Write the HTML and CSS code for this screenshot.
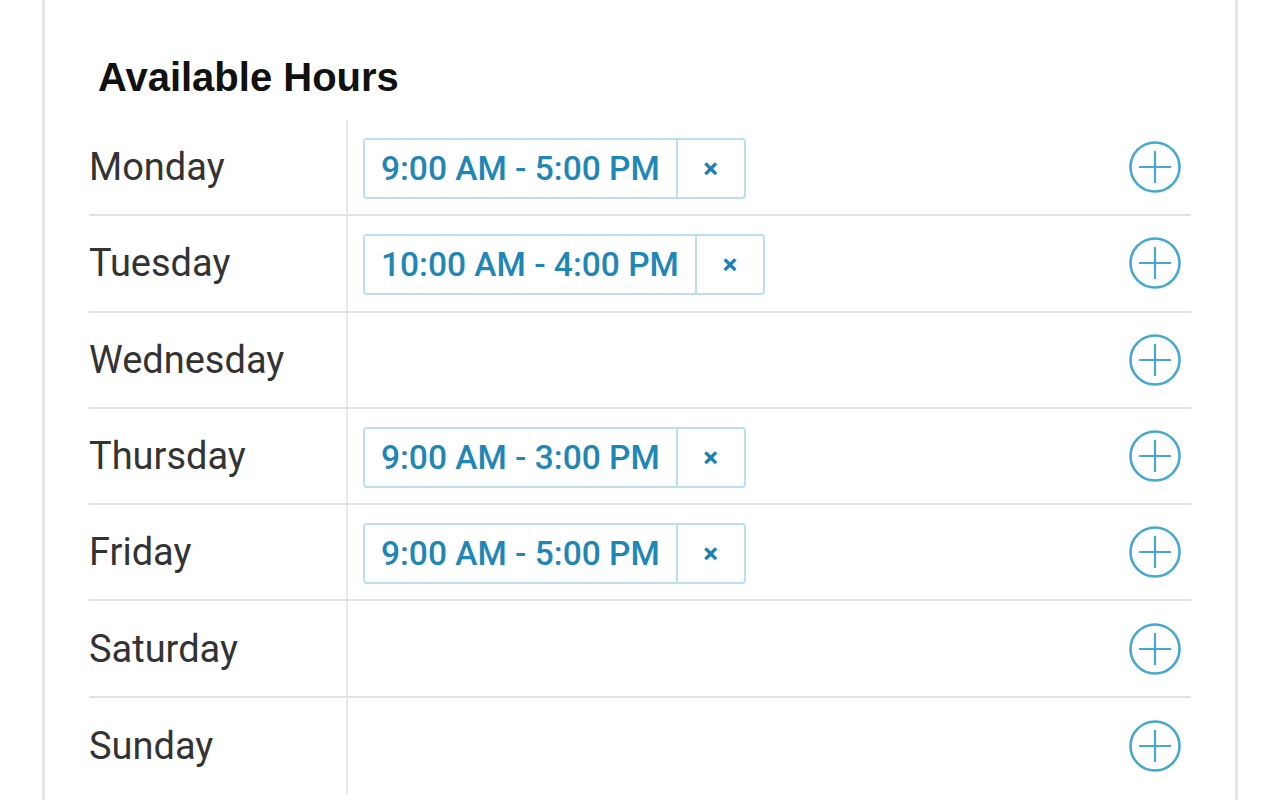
FILE: index.html
```html
<!DOCTYPE html>
<html lang="en">
<head>
  <meta charset="UTF-8">
  <meta name="viewport" content="width=device-width, initial-scale=1.0">
  <title>Available Hours</title>
  <link rel="stylesheet" href="styles.css">
</head>
<body>
  <div class="panel">
    <h2 class="panel-title">Available Hours</h2>
    <ul class="hours">
      <li class="day-row">
        <span class="day-name">Monday</span>
        <div class="day-slots">
          <span class="slot"><span class="slot-time">9:00 AM - 5:00 PM</span><span class="slot-remove">×</span></span>
          <span class="add-btn"><svg width="54" height="54" viewBox="0 0 54 54"><circle cx="27" cy="27" r="24.5"/><path d="M27 11v32M11 27h32"/></svg></span>
        </div>
      </li>
      <li class="day-row">
        <span class="day-name">Tuesday</span>
        <div class="day-slots">
          <span class="slot"><span class="slot-time">10:00 AM - 4:00 PM</span><span class="slot-remove">×</span></span>
          <span class="add-btn"><svg width="54" height="54" viewBox="0 0 54 54"><circle cx="27" cy="27" r="24.5"/><path d="M27 11v32M11 27h32"/></svg></span>
        </div>
      </li>
      <li class="day-row">
        <span class="day-name">Wednesday</span>
        <div class="day-slots">
          <span class="add-btn"><svg width="54" height="54" viewBox="0 0 54 54"><circle cx="27" cy="27" r="24.5"/><path d="M27 11v32M11 27h32"/></svg></span>
        </div>
      </li>
      <li class="day-row">
        <span class="day-name">Thursday</span>
        <div class="day-slots">
          <span class="slot"><span class="slot-time">9:00 AM - 3:00 PM</span><span class="slot-remove">×</span></span>
          <span class="add-btn"><svg width="54" height="54" viewBox="0 0 54 54"><circle cx="27" cy="27" r="24.5"/><path d="M27 11v32M11 27h32"/></svg></span>
        </div>
      </li>
      <li class="day-row">
        <span class="day-name">Friday</span>
        <div class="day-slots">
          <span class="slot"><span class="slot-time">9:00 AM - 5:00 PM</span><span class="slot-remove">×</span></span>
          <span class="add-btn"><svg width="54" height="54" viewBox="0 0 54 54"><circle cx="27" cy="27" r="24.5"/><path d="M27 11v32M11 27h32"/></svg></span>
        </div>
      </li>
      <li class="day-row">
        <span class="day-name">Saturday</span>
        <div class="day-slots">
          <span class="add-btn"><svg width="54" height="54" viewBox="0 0 54 54"><circle cx="27" cy="27" r="24.5"/><path d="M27 11v32M11 27h32"/></svg></span>
        </div>
      </li>
      <li class="day-row">
        <span class="day-name">Sunday</span>
        <div class="day-slots">
          <span class="add-btn"><svg width="54" height="54" viewBox="0 0 54 54"><circle cx="27" cy="27" r="24.5"/><path d="M27 11v32M11 27h32"/></svg></span>
        </div>
      </li>
    </ul>
  </div>
</body>
</html>
```

FILE: styles.css
```css
body, ul, li, h2 {
  margin: 0;
  padding: 0;
  box-sizing: border-box;
}
ul, li {
  list-style: none;
}
body {
  background: #fff;
  font-family: Roboto, "Liberation Sans", Arial, sans-serif;
  height: 800px;
  overflow: hidden;
}
.panel {
  width: 1196px;
  margin-left: 42px;
  padding: 53px 44px 0 44px;
  border-left: 3px solid #e6e6e6;
  border-right: 3px solid #e6e6e6;
  box-sizing: border-box;
  min-height: 800px;
}
.panel-title {
  margin-left: 9px;
  font-family: "Liberation Sans", Arial, sans-serif;
  font-size: 40px;
  line-height: 48px;
  font-weight: bold;
  color: #111;
}
.hours {
  margin-top: 19px;
  width: 1102px;
}
.day-row {
  display: flex;
  height: 96.3px;
  border-bottom: 2px solid #e3e3e3;
}
.day-row:last-child {
  border-bottom: none;
}
.day-name {
  width: 257px;
  flex-shrink: 0;
  display: flex;
  align-items: center;
  font-size: 38px;
  color: #333;
}
.day-slots {
  flex: 1;
  display: flex;
  align-items: center;
  padding: 2px 9px 0 15px;
  border-left: 2px solid #e8e8e8;
}
.slot {
  display: inline-flex;
  box-sizing: border-box;
  height: 61px;
  border: 2px solid #bcdfee;
  border-radius: 4px;
  color: #1f86b6;
}
.slot-time {
  padding: 0 16px 0 16px;
  font-size: 33.5px;
  font-weight: 500;
  line-height: 57px;
}
.slot-remove {
  width: 66px;
  border-left: 2px solid #bcdfee;
  text-align: center;
  font-size: 28px;
  font-weight: bold;
  line-height: 57px;
  color: #1d7fb0;
}
.add-btn {
  margin-left: auto;
  margin-top: -2px;
  display: flex;
}
.add-btn svg {
  fill: none;
  stroke: #46a8cc;
}
.add-btn circle {
  stroke-width: 2.6;
}
.add-btn path {
  stroke-width: 2.2;
}
```
